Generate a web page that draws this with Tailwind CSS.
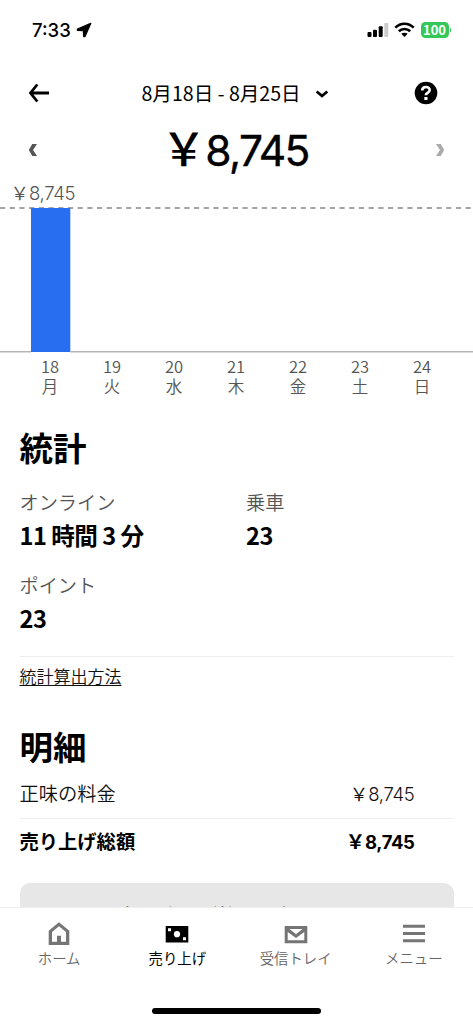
<!DOCTYPE html>
<html lang="ja">
<head>
<meta charset="utf-8">
<title>売り上げ</title>
<script src="https://cdn.jsdelivr.net/npm/@tailwindcss/browser@4"></script>
</head>
<body class="bg-white">
<div class="relative flex h-[1024px] w-[473px] flex-col overflow-hidden bg-white font-['Noto_Sans_CJK_JP',sans-serif] text-black">
  <!-- status bar -->
  <div class="flex h-[60px] shrink-0 items-center pl-[32px] pr-[22px]">
    <span class="font-[Inter,sans-serif] text-[18.500px] font-medium leading-[20px]">7:33</span>
    <svg class="ml-[5px]" width="16" height="16" viewBox="0 0 16 16"><path d="M14.800 1.300 9 14.500 7.700 14.500 7.400 8.700 1.400 8.300 1.400 7.200Z" stroke="#000" stroke-width="1.300" stroke-linejoin="round"/></svg>
    <svg class="ml-auto" width="22" height="16" viewBox="0 0 22 16"><rect x=".5" y="10" width="4" height="5" rx="1"/><rect x="6" y="7.700" width="4" height="7.300" rx="1"/><rect x="11.700" y="4.300" width="4" height="10.700" rx="1"/><rect x="17.300" y="1" width="4" height="14" rx="1" fill="#ccc"/></svg>
    <svg class="ml-[5px]" width="21" height="16" viewBox="0 0 21 16"><g fill="none" stroke="#000" stroke-width="2.600"><path d="M1.300 5.700C6.500.500 14.500.500 19.700 5.700"/><path d="M4.800 9.300C8 6.200 13 6.200 16.200 9.300"/></g><path d="M10.500 15 7.300 11.800C9 10.300 12 10.300 13.700 11.800Z"/></svg>
    <div class="ml-[6px] flex h-[16px] w-[28px] items-center justify-center rounded-[4.500px] bg-[#34c759] text-[13px] font-bold leading-[16px] text-white">100</div>
    <div class="ml-[1px] h-[4px] w-[1.500px] rounded-r-full bg-[#34c759]"></div>
  </div>
  <!-- date range -->
  <header class="flex h-[66px] shrink-0 items-center pl-[28px] pr-[35px]">
    <svg width="22" height="20" viewBox="0 0 22 20" fill="none" stroke="#000" stroke-width="2.800"><path d="M21 10H3M9.300 1.500 2.500 10l6.800 8.500"/></svg>
    <div class="ml-[91.500px] whitespace-nowrap text-[19.600px] leading-[24px]">8月18日 - 8月25日</div>
    <svg class="ml-[14px] mt-[2px]" width="14" height="10" viewBox="0 0 14 10" fill="none" stroke="#000" stroke-width="2.800"><path d="M1.700 2.500 7 7l5.300-4.500"/></svg>
    <svg class="ml-auto" width="24" height="24" viewBox="0 0 24 24"><circle cx="12" cy="12" r="11.300"/><path d="M8.200 9.600C8.200 4.800 15.700 4.800 15.700 9.100c0 3-3.900 2.400-3.900 5.100" fill="none" stroke="#fff" stroke-width="2.600"/><rect x="10.300" y="16" width="3.200" height="3" fill="#fff"/></svg>
  </header>
  <!-- weekly total -->
  <div class="flex h-[48px] shrink-0 items-center justify-between pl-[28px] pr-[28px]">
    <svg width="11" height="14" viewBox="0 0 11 14"><path d="M4.300 1H9L5 7l4 6H4.300L.800 7Z" fill="#555"/></svg>
    <div class="flex h-[48px] items-baseline whitespace-nowrap pl-[3px] text-[45px] leading-[42px]"><span class="w-[38px] -indent-[6px] font-medium">￥</span><span class="font-[Inter,sans-serif] text-[42.500px] tracking-[-1.700px] [-webkit-text-stroke:0.400px_#000]">8,745</span></div>
    <svg width="11" height="14" viewBox="0 0 11 14"><path d="M6.700 1H2L6 7l-4 6h4.700L10.200 7Z" fill="#aaa"/></svg>
  </div>
  <!-- chart -->
  <div class="flex h-[33px] shrink-0 items-baseline pl-[10.500px] pt-[5px] text-[18.500px] font-[350] leading-[26px] text-[#555]"><span>￥</span><span class="font-[Inter,sans-serif] text-[18.500px] tracking-[-0.300px]">8,745</span></div>
  <svg class="shrink-0" width="473" height="146" viewBox="0 0 473 146"><path d="M0 1H471" stroke="#888" stroke-width="1.500" stroke-dasharray="5.200 4.500"/><rect x="31" y="1" width="39.300" height="144"  fill="#276ef1"/><path d="M0 144.700H31M70.300 144.700H473" stroke="#b5b5b5" stroke-width="1.400"/></svg>
  <div class="ml-[19px] grid w-[434px] shrink-0 grid-cols-7 pt-[3px] text-center text-[16.500px] font-[350] leading-[20px] text-[#555]">
    <div>18<br>月</div><div>19<br>火</div><div>20<br>水</div><div>21<br>木</div><div>22<br>金</div><div>23<br>土</div><div>24<br>日</div>
  </div>
  <!-- statistics -->
  <section class="flex shrink-0 flex-col px-[19.500px] pt-[29px]">
    <h2 class="text-[33.500px] font-bold leading-[44px]">統計</h2>
    <div class="mt-[19px] grid grid-cols-[226.500px_1fr] gap-y-[18px]">
      <div><div class="text-[19.200px] font-[350] leading-[28px] text-[#555]">オンライン</div><div class="mt-[2px] mb-px text-[23.600px] font-bold leading-[34px] tracking-[-0.500px]">11 時間 3 分</div></div>
      <div><div class="text-[19.200px] font-[350] leading-[28px] text-[#555]">乗車</div><div class="mt-[2px] mb-px text-[23.600px] font-bold leading-[34px] tracking-[-0.500px]">23</div></div>
      <div><div class="text-[19.200px] font-[350] leading-[28px] text-[#555]">ポイント</div><div class="mt-[2px] mb-px text-[23.600px] font-bold leading-[34px] tracking-[-0.500px]">23</div></div>
    </div>
    <div class="mt-[20px] border-t border-[#eee] pt-[7px] text-[17px] font-[350] leading-[24px] text-[#111]"><a class="underline decoration-1 underline-offset-2">統計算出方法</a></div>
  </section>
  <!-- breakdown -->
  <section class="flex shrink-0 flex-col px-[19.500px] pt-[36px]">
    <h2 class="text-[33.500px] font-bold leading-[44px]">明細</h2>
    <div class="flex h-[51px] items-center justify-between border-b border-[#eee] pr-[39px] text-[19.300px] font-[350] leading-[28px] text-[#111]"><span>正味の料金</span><span class="flex items-baseline text-[18.500px]">￥<span class="font-[Inter,sans-serif] tracking-[-0.300px]">8,745</span></span></div>
    <div class="flex h-[44px] items-center justify-between pr-[39px] text-[19.300px] font-bold leading-[28px]"><span>売り上げ総額</span><span class="flex items-baseline">￥<span class="font-[Inter,sans-serif] text-[18.500px] tracking-[-0.400px]">8,745</span></span></div>
    <div class="mt-[20px] flex h-[66px] items-center justify-center rounded-[10px] bg-[#e7e7e7] text-[21.800px] leading-[30px]">売り上げ詳細を確認する</div>
  </section>
  <!-- tab bar -->
  <nav class="absolute inset-x-0 bottom-0 flex h-[117px] flex-col border-t border-[#eee] bg-white">
    <div class="grid grid-cols-4 pt-[13px] text-center text-[14.400px] leading-[20px] text-[#757575]">
      <div class="flex flex-col items-center gap-[1px]"><svg width="24" height="26" viewBox="0 0 24 26"><path fill-rule="evenodd" d="M12 1.300 22.300 9.700V24H1.700V9.700ZM12 5.200 5 11V20.800h5v-6h4v6h5v-9.800Z" fill="#757575"/></svg><span class="font-[350] text-[#666]">ホーム</span></div>
      <div class="flex flex-col items-center gap-[1px] text-black"><svg width="24" height="26" viewBox="0 0 24 26"><path d="M.700 5H23.300V21.500H.700Z"/><circle cx="12" cy="13.200" r="3.100" fill="#fff"/><path d="M3 7.300h3v3H3ZM18 16.300h3v3h-3Z" fill="#fff"/></svg><span>売り上げ</span></div>
      <div class="flex flex-col items-center gap-[1px]"><svg width="24" height="26" viewBox="0 0 24 26"><path fill-rule="evenodd" d="M.700 5H23.300V22.300H.700ZM3.700 11v8.300h16.600v-8.300l-8.300 6ZM5.500 8 12 13.300 18.500 8Z" fill="#757575"/></svg><span class="font-[350] text-[#666]">受信トレイ</span></div>
      <div class="flex flex-col items-center gap-[1px]"><svg width="24" height="26" viewBox="0 0 24 26"><path d="M1 5.200H23M1 12.500H23M1 19.700H23" stroke="#757575" stroke-width="2.900"/></svg><span class="font-[350] text-[#666]">メニュー</span></div>
    </div>
    <div class="mx-auto mt-auto mb-[10px] h-[6px] w-[169px] rounded-full bg-black"></div>
  </nav>
</div>
</body>
</html>
